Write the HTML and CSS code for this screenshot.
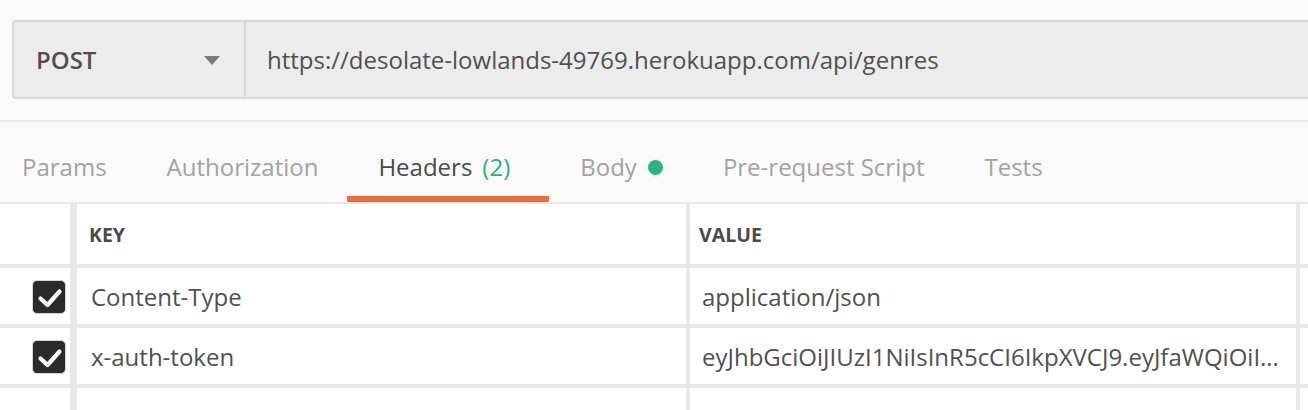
FILE: index.html
```html
<!DOCTYPE html>
<html lang="en">
<head>
<meta charset="utf-8">
<title>Request</title>
<link rel="stylesheet" href="styles.css">
</head>
<body>
  <div class="request-area">
    <div class="request-bar">
      <div class="method">
        <span class="method-name">POST</span>
        <svg class="caret" width="16" height="9" viewBox="0 0 16 9"><path d="M0 0 H16 L8 9 Z" fill="#7b7b7b"/></svg>
      </div>
      <div class="url">https://desolate-lowlands-49769.herokuapp.com/api/genres</div>
    </div>
  </div>

  <nav class="tabs">
    <div class="tab">Params</div>
    <div class="tab">Authorization</div>
    <div class="tab active"><span>Headers</span><span class="count">(2)</span></div>
    <div class="tab">Body<span class="dot"></span></div>
    <div class="tab">Pre-request Script</div>
    <div class="tab">Tests</div>
  </nav>

  <div class="table">
    <div class="row head">
      <div class="cell check"></div>
      <div class="cell key">KEY</div>
      <div class="cell value">VALUE</div>
      <div class="cell extra"></div>
    </div>
    <div class="row">
      <div class="cell check">
        <span class="checkbox"><svg width="33" height="33" viewBox="0 0 33 33"><polyline points="7.5,17.5 14.5,24 26.5,10.5" fill="none" stroke="#fff" stroke-width="4.2" stroke-linecap="round" stroke-linejoin="round"/></svg></span>
      </div>
      <div class="cell key">Content-Type</div>
      <div class="cell value">application/json</div>
      <div class="cell extra"></div>
    </div>
    <div class="row">
      <div class="cell check">
        <span class="checkbox"><svg width="33" height="33" viewBox="0 0 33 33"><polyline points="7.5,17.5 14.5,24 26.5,10.5" fill="none" stroke="#fff" stroke-width="4.2" stroke-linecap="round" stroke-linejoin="round"/></svg></span>
      </div>
      <div class="cell key">x-auth-token</div>
      <div class="cell value">eyJhbGciOiJIUzI1NiIsInR5cCI6IkpXVCJ9.eyJfaWQiOiI…</div>
      <div class="cell extra"></div>
    </div>
    <div class="row">
      <div class="cell check"></div>
      <div class="cell key placeholder">Key</div>
      <div class="cell value placeholder">Value</div>
      <div class="cell extra"></div>
    </div>
  </div>
</body>
</html>
```
FILE: styles.css
```css
* { box-sizing: border-box; }

html, body {
  margin: 0;
  padding: 0;
  background: #fafafa;
  font-family: "Open Sans", "Liberation Sans", sans-serif;
  color: #505050;
  overflow: hidden;
}

.request-area {
  padding: 20px 0 21px 12px;
}

.request-bar {
  display: flex;
  height: 79px;
  background: #ececec;
  border: 2px solid #d8d8d8;
  border-right: none;
  border-radius: 4px 0 0 4px;
}

.method {
  width: 232px;
  display: flex;
  align-items: center;
  justify-content: space-between;
  padding: 0 24px 0 22px;
  border-right: 2px solid #d8d8d8;
}

.method-name {
  font-size: 24px;
  font-weight: 600;
  color: #4f4f4f;
}

.caret { display: block; margin-top: 2px; }

.url {
  display: flex;
  align-items: center;
  padding-left: 21px;
  font-size: 24px;
  color: #505050;
}

.tabs {
  display: flex;
  gap: 60px;
  height: 82px;
  padding-left: 22px;
  border-top: 2px solid #e8e8e8;
}

.tab {
  position: relative;
  display: flex;
  align-items: flex-start;
  padding-top: 28px;
  height: 80px;
  font-size: 24px;
  line-height: 33px;
  color: #a2a2a2;
}

.tab.active {
  color: #4a4a4a;
  margin-right: 10px;
}

.tab.active::after {
  content: "";
  position: absolute;
  left: -31px;
  right: -39px;
  bottom: 0;
  height: 6px;
  background: #f26b3a;
}

.count {
  color: #26b47f;
  margin-left: 10px;
}

.dot {
  width: 15px;
  height: 15px;
  border-radius: 50%;
  background: #26b47f;
  margin: 10px 0 0 11px;
}

.table {
  background: #ffffff;
  border-top: 2px solid #e8e8e8;
}

.row {
  display: grid;
  grid-template-columns: 77px 613px 610px 1fr;
  height: 60px;
  border-bottom: 4px solid #e8e8e8;
}

.row.head { height: 64px; }

.cell {
  display: flex;
  align-items: center;
  border-right: 4px solid #e8e8e8;
  font-size: 24px;
  white-space: nowrap;
  overflow: hidden;
}

.cell.check {
  border-right-width: 7px;
  justify-content: flex-end;
  padding-right: 4px;
}

.cell.extra { border-right: none; }

.cell.key { padding-left: 14px; }
.cell.value { padding-left: 12px; }

.row.head .cell {
  font-size: 19.5px;
  font-weight: 700;
  color: #4a4a4a;
}

.row.head .cell.key { padding-left: 12px; }
.row.head .cell.value { padding-left: 9px; }

.checkbox {
  display: block;
  width: 34px;
  height: 34px;
  border-radius: 5px;
  background: #2b2b2b;
  border: 1px solid #d6d6d6;
  margin-top: 2px;
}

.checkbox svg { display: block; margin: 0; }

.placeholder {
  color: #c9c9c9;
  align-items: flex-start;
  padding-top: 14px;
}
```
